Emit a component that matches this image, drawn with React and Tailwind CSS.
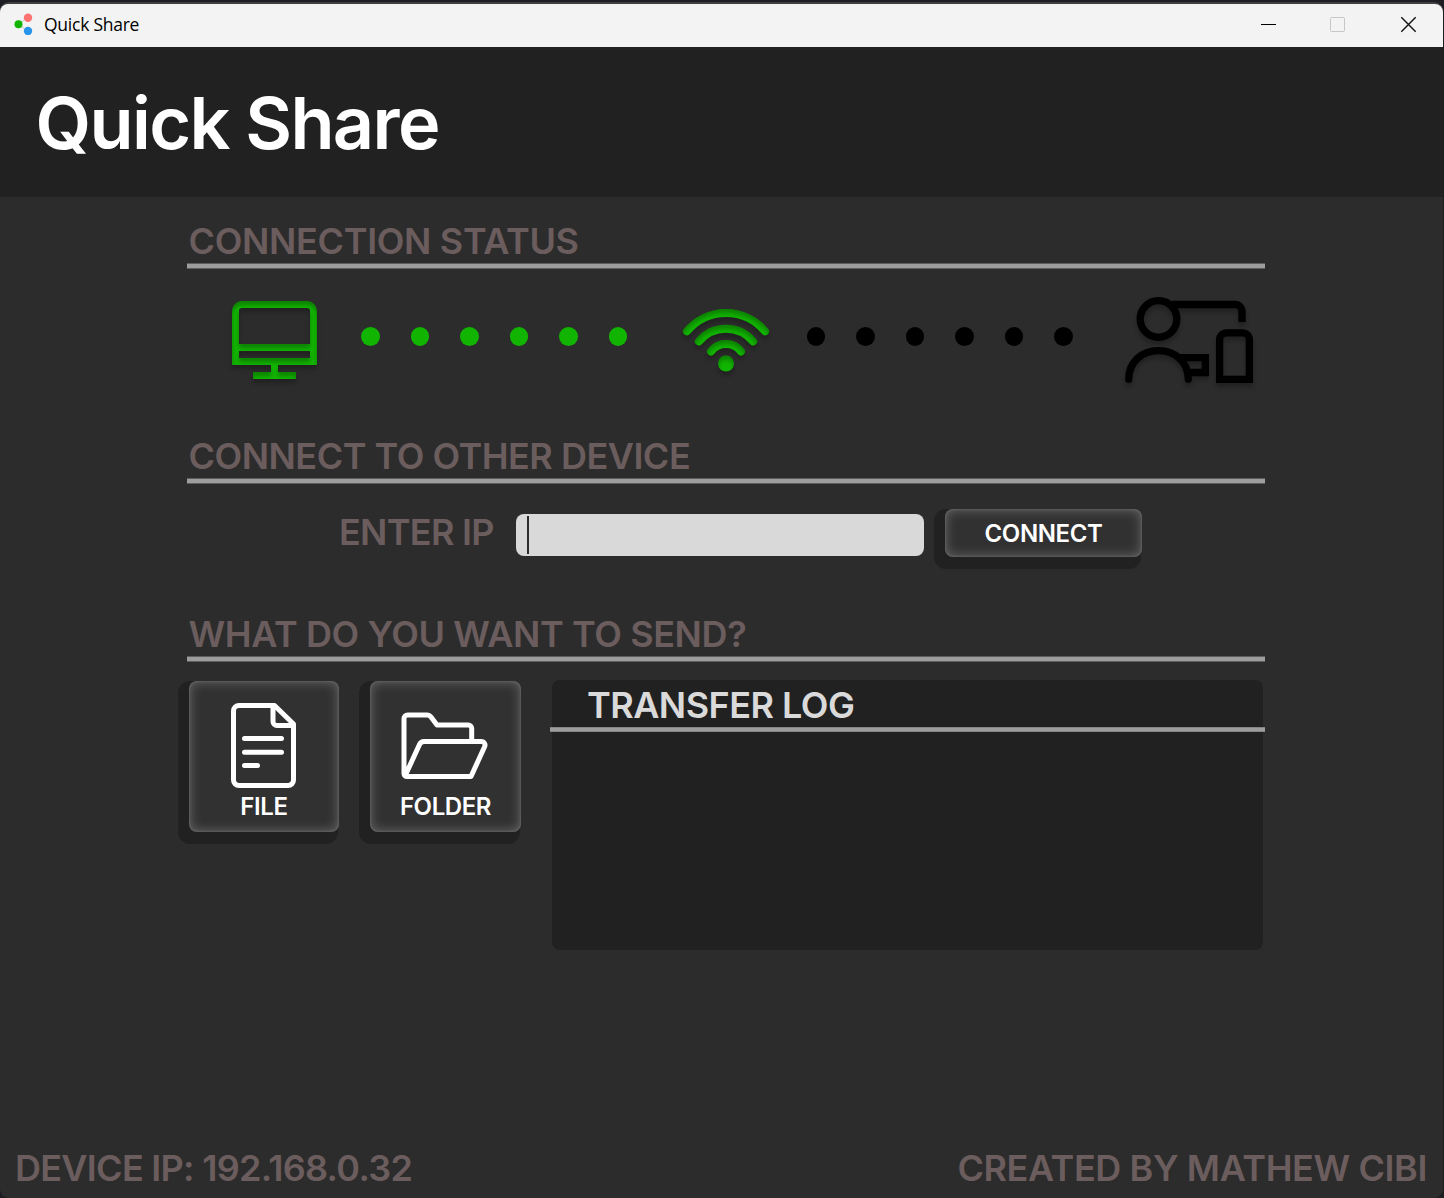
import React from "react";

function Heading({ children, className = "" }) {
  return (
    <h2 className={`whitespace-nowrap text-[36px] leading-[36px] font-semibold text-[#6b5d5d] ${className}`}>
      {children}
    </h2>
  );
}

function Section({ title, tracking, children }) {
  return (
    <section>
      <div className="h-[40px]">
        <Heading className={`pl-[1.5px] ${tracking}`}>{title}</Heading>
      </div>
      <div className="h-[6px] border-y border-[#5f5f5f] bg-[#9d9d9d]" />
      {children}
    </section>
  );
}

function RaisedButton({ className, children }) {
  return (
    <div className="rounded-xl bg-[#212121] pb-[12px] pl-[11px]">
      <button
        className={`-mr-px flex flex-col items-center rounded-lg bg-[#313131] text-[24px] leading-[24px] font-semibold tracking-[-0.4px] text-white shadow-[inset_0_0_3px_0px_rgba(255,255,255,0.22),inset_0_0_11px_2px_rgba(255,255,255,0.22)] ${className}`}
      >
        {children}
      </button>
    </div>
  );
}

function Dots({ className }) {
  return (
    <div className="flex gap-[31px]">
      {[0, 1, 2, 3, 4, 5].map((i) => (
        <span key={i} className={`size-[18.5px] rounded-full ${className}`} />
      ))}
    </div>
  );
}

function Filters() {
  return (
    <defs>
      <filter id="depth" x="-20%" y="-20%" width="140%" height="150%" colorInterpolationFilters="sRGB">
        <feOffset in="SourceAlpha" dy="4" result="moved" />
        <feGaussianBlur in="moved" stdDeviation="2" result="soft" />
        <feComposite in="SourceAlpha" in2="soft" operator="out" result="inner" />
        <feColorMatrix in="inner" type="matrix" values="0 0 0 0 0  0 0 0 0 0  0 0 0 0 0  0 0 0 0.28 0" result="shade" />
        <feColorMatrix in="soft" type="matrix" values="0 0 0 0 0  0 0 0 0 0  0 0 0 0 0  0 0 0 0.25 0" result="drop" />
        <feMerge>
          <feMergeNode in="drop" />
          <feMergeNode in="SourceGraphic" />
          <feMergeNode in="shade" />
        </feMerge>
      </filter>
    </defs>
  );
}

function MonitorIcon() {
  return (
    <svg width="85" height="90" viewBox="0 0 85 90" fill="none" className="overflow-visible">
      <Filters />
      <g filter="url(#depth)" stroke="#11b400" strokeWidth="7">
        <path d="M3.5 60.5V10a6.5 6.5 0 0 1 6.500-6.500H75a6.500 6.500 0 0 1 6.500 6.500V60.500Z" />
        <path d="M3.500 46.500H81.500M42.500 60V74M21 74.500H64" />
      </g>
    </svg>
  );
}

function WifiIcon() {
  return (
    <svg width="86" height="70" viewBox="683 309 86 70" fill="none" className="overflow-visible">
      <g filter="url(#depth)" stroke="#11b400" strokeWidth="8" strokeLinecap="round">
        <path d="M687 331.300A50.500 50.500 0 0 1 765 331.300" />
        <path d="M698.900 341.500A35 35 0 0 1 753.100 341.500" />
        <path d="M711 351.500A18.800 18.800 0 0 1 741 351.500" />
        <circle cx="726" cy="363.500" r="8" fill="#11b400" stroke="none" />
      </g>
    </svg>
  );
}

function ReceiverIcon() {
  return (
    <svg width="128" height="90" viewBox="1125 297 128 90" fill="none" className="overflow-visible">
      <g filter="url(#depth)" stroke="#000" strokeWidth="7.300">
        <circle cx="1158.500" cy="319" r="18.300" />
        <path d="M1172 304.500H1235a7 7 0 0 1 7 7V322" />
        <path d="M1128.700 379.200C1128.700 362 1142 350.700 1158.500 350.700S1188.300 362 1188.300 379.200" strokeLinecap="round" />
        <path d="M1178 357.700H1205.300V372.500H1189" />
        <path d="M1219.600 379.300V339.800a7 7 0 0 1 7-7H1242.400a7 7 0 0 1 7 7V379.300Z" />
      </g>
    </svg>
  );
}

function FileIcon() {
  return (
    <svg width="65" height="85" viewBox="231 703 65 85" fill="none" stroke="#fff" strokeWidth="5" strokeLinejoin="round" strokeLinecap="round" className="mr-px">
      <path d="M274.500 705.500H239a5.500 5.500 0 0 0-5.500 5.500V780a5.500 5.500 0 0 0 5.500 5.500H288a5.500 5.500 0 0 0 5.500-5.500V724Z" />
      <path d="M273 706V721.500a4 4 0 0 0 4 4H293" />
      <path d="M244.500 738.600H281.500M244.500 752.300H281.500M244.500 765.600H257.500" />
    </svg>
  );
}

function FolderIcon() {
  return (
    <svg width="87" height="67" viewBox="401.500 712 87 67" fill="none" stroke="#fff" strokeWidth="5" strokeLinejoin="round" strokeLinecap="round" className="mr-[2px]">
      <path d="M472.200 740V728.500a3.500 3.500 0 0 0-3.500-3.500H437.500L431.500 717a5 5 0 0 0-3.500-2H408a3.500 3.500 0 0 0-3.500 3.500V773.500a3 3 0 0 0 3 3H471.500L485.200 746.500a3.500 3.500 0 0 0-3-4.900H424.500a5 5 0 0 0-4.500 3L406 775" />
    </svg>
  );
}

function TitleBar() {
  return (
    <div className="flex h-[43px] items-center rounded-t-lg bg-[#f3f3f3] pb-[3px] pl-[14px] text-black">
      <svg width="19" height="22" viewBox="14 13 19 22">
        <path d="M27.500 17.500L18.500 24.300L27.500 31" stroke="#d9d9d9" fill="none" strokeWidth="1.500" />
        <circle cx="28" cy="17.700" r="4.200" fill="#ff7272" />
        <circle cx="18.500" cy="24.300" r="4" fill="#11b400" />
        <circle cx="28" cy="31" r="4.200" fill="#2795ea" />
      </svg>
      <span className="ml-[11px] font-['Open_Sans'] text-[17.500px] leading-6 tracking-[-0.25px]">Quick Share</span>
      <svg width="150" height="20" viewBox="1260 14 150 20" fill="none" className="mr-[33px] ml-auto overflow-visible">
        <path d="M1261 24.500H1276" stroke="#000" />
        <rect x="1330.500" y="17.500" width="14" height="14" rx="1" stroke="#c6c6c6" />
        <path d="M1401.300 17.300L1415.700 31.700M1415.700 17.300L1401.300 31.700" stroke="#111" strokeWidth="1.400" />
      </svg>
    </div>
  );
}

export default function App() {
  return (
    <div className="h-[1198px] w-[1444px] overflow-hidden bg-[#1d1e24] pt-[2px] font-[Inter,sans-serif]">
      <div className="flex h-[1196px] w-[1443px] flex-col rounded-[9px] border-t-2 border-[#3f3f40] bg-[#2c2c2c]">
        <TitleBar />
        <header className="h-[150px] shrink-0 bg-[#212121] pt-[40px] pl-[35.5px]">
          <h1 className="text-[72px] leading-[72px] font-semibold tracking-[-1.65px] whitespace-nowrap text-white">Quick Share</h1>
        </header>
        <main className="ml-[187px] w-[1078px] grow pt-[26px]">
          <Section title="CONNECTION STATUS" tracking="tracking-[-0.33px]">
            <div className="flex h-[169px] items-start pl-[45px]">
              <div className="mt-[32px]"><MonitorIcon /></div>
              <div className="mt-[58px] ml-[44px]"><Dots className="bg-[#11b400]" /></div>
              <div className="mt-[40px] ml-[56px]"><WifiIcon /></div>
              <div className="mt-[58px] ml-[37.500px]"><Dots className="bg-black" /></div>
              <div className="mt-[28px] ml-[52.500px]"><ReceiverIcon /></div>
            </div>
          </Section>
          <Section title="CONNECT TO OTHER DEVICE" tracking="tracking-[-0.5px]">
            <div className="flex h-[132px] items-start pt-[25px] pl-[151px]">
              <Heading className="mt-[5px] w-[178px] pl-px tracking-[-0.7px]">ENTER IP</Heading>
              <div className="mt-[4.500px] h-[42.500px] w-[408px] rounded-lg bg-[#d9d9d9] pt-[2px] pl-[11px]">
                <div className="h-[38px] w-[2px] bg-[#2c2c2c]" />
              </div>
              <div className="ml-[10px] w-[207px]">
                <RaisedButton className="h-[48px] w-[197px] pt-[13px]">CONNECT</RaisedButton>
              </div>
            </div>
          </Section>
          <Section title="WHAT DO YOU WANT TO SEND?" tracking="tracking-[-0.4px]">
            <div className="-ml-[9px] flex items-start pt-[18px]">
              <div className="mt-[1px] w-[160px]">
                <RaisedButton className="h-[150.5px] w-[150px] pt-[22px]">
                  <FileIcon />
                  <span className="mt-[7px]">FILE</span>
                </RaisedButton>
              </div>
              <div className="mt-[1px] ml-[21px] w-[161px]">
                <RaisedButton className="h-[150.5px] w-[151px] pt-[31px]">
                  <FolderIcon />
                  <span className="mt-[16px]">FOLDER</span>
                </RaisedButton>
              </div>
              <div className="ml-[32px] h-[270px] w-[711px] rounded-lg bg-[#212121]">
                <div className="-mr-[2px] -ml-[2px] h-[47px] pt-[7px] pl-[37px]">
                  <h2 className="text-[36px] leading-[36px] font-semibold tracking-[-0.53px] whitespace-nowrap text-[#dadada]">TRANSFER LOG</h2>
                </div>
                <div className="-mr-[2px] -ml-[2px] h-[5px] border-y border-[#858585] bg-[#9d9d9d]" />
              </div>
            </div>
          </Section>
        </main>
        <footer className="flex h-[48px] shrink-0 justify-between pr-[16px] pl-[15px]">
          <Heading className="tracking-[-0.72px]">DEVICE IP: 192.168.0.32</Heading>
          <Heading className="tracking-[-0.41px]">CREATED BY MATHEW CIBI</Heading>
        </footer>
      </div>
    </div>
  );
}
